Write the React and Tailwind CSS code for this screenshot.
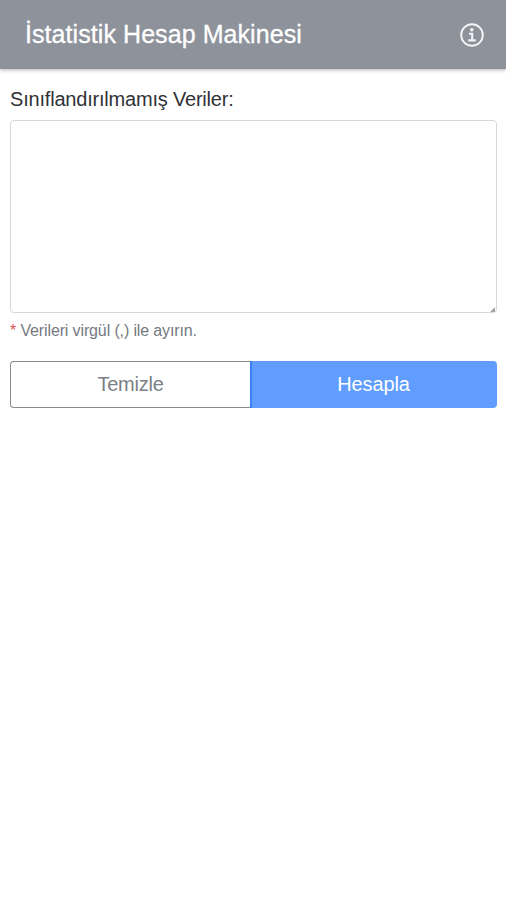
import { useState } from 'react'

function InfoIcon() {
  return (
    <svg width="24" height="24" viewBox="0 0 24 24" fill="none" stroke="#f3f4f6">
      <circle cx="12" cy="12" r="10.8" strokeWidth="1.9" />
      <circle cx="11.8" cy="6.7" r="1.8" fill="#f3f4f6" stroke="none" />
      <path d="M9 10.7h3.2v6.6M8.2 17.4h7.6" strokeWidth="2.1" />
    </svg>
  )
}

export default function App() {
  const [data, setData] = useState('')

  return (
    <div className="min-h-screen bg-white font-['Liberation_Sans',Arial,sans-serif] text-[#303236]">
      <header className="flex h-[69px] items-center justify-between bg-[#8e929b] pr-[22px] pl-[25px] text-white shadow-[0_1px_4px_rgba(0,0,0,0.3)]">
        <h1 className="text-[25px] tracking-[0.07px] [-webkit-text-stroke:0.3px_white]">
          İstatistik Hesap Makinesi
        </h1>
        <button aria-label="Bilgi">
          <InfoIcon />
        </button>
      </header>

      <main className="px-[10px] pt-[18px]">
        <label htmlFor="data" className="block text-[20px] leading-6 tracking-[-0.2px]">
          Sınıflandırılmamış Veriler:
        </label>
        <div className="relative mt-[9px] h-[193px] w-[487px]">
          <textarea
            id="data"
            className="block h-full w-full resize-none rounded-[4px] border border-[#d5d8dd] bg-white p-3 outline-none"
            value={data}
            onChange={(e) => setData(e.target.value)}
          />
          <svg
            className="pointer-events-none absolute right-[2px] bottom-[1px]"
            width="5"
            height="5"
            viewBox="0 0 5 5"
          >
            <path d="M5 0v5H0z" fill="#a3a6a9" />
          </svg>
        </div>
        <p className="mt-[8px] text-[16px] leading-5 tracking-[-0.13px] text-[#747a80]">
          <span className="text-[#e05555]">*</span> Verileri virgül (,) ile ayırın.
        </p>

        <div className="mt-[20px] flex h-[47px] w-[487px] text-[20px]">
          <button
            className="w-[240px] rounded-l-[4px] border-[1.5px] border-r-0 border-[#868b90] pb-[1px] tracking-[-0.25px] text-[#7b8085]"
            onClick={() => setData('')}
          >
            Temizle
          </button>
          <button className="flex-1 rounded-r-[4px] border-l-2 border-[#3a83f2] bg-[#609dff] pr-[2px] pb-[1px] tracking-[-0.1px] text-white">
            Hesapla
          </button>
        </div>
      </main>
    </div>
  )
}
